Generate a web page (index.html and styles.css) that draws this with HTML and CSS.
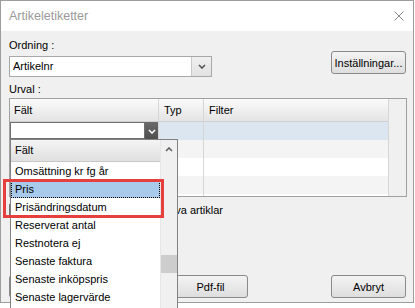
FILE: index.html
```html
<!DOCTYPE html>
<html lang="sv">
<head>
  <meta charset="UTF-8" />
  <title>Artikeletiketter</title>
  <link rel="stylesheet" href="styles.css">
</head>
<body>
  <div class="screen">
    <div class="window">
      <div class="titlebar">
        <span class="title">Artikeletiketter</span>
        <svg class="close" width="10" height="10" viewBox="0 0 10 10">
          <path d="M0.5 0.5 L9.5 9.5 M9.5 0.5 L0.5 9.5" stroke="#8a8a8a" stroke-width="1" fill="none"/>
        </svg>
      </div>
      <div class="content">
        <div class="top-row">
          <div class="order">
            <div class="label">Ordning :</div>
            <div class="combo">
              <span class="combo-text">Artikelnr</span>
              <span class="combo-btn">
                <svg width="8" height="5" viewBox="0 0 8 5"><path d="M1 1 L4 4 L7 1" stroke="#555" stroke-width="1.6" fill="none"/></svg>
              </span>
            </div>
          </div>
          <button class="btn btn-settings">Inställningar...</button>
        </div>

        <div class="label urval">Urval :</div>
        <div class="grid">
          <div class="row head">
            <div class="cell">Fält</div>
            <div class="cell">Typ</div>
            <div class="cell">Filter</div>
            <div class="cell rest"></div>
          </div>
          <div class="row edit">
            <div class="cell editor">
              <span class="editor-box"></span>
              <span class="editor-btn">
                <svg width="8" height="5" viewBox="0 0 8 5"><path d="M1 1 L4 4 L7 1" stroke="#fff" stroke-width="1.6" fill="none"/></svg>
              </span>
            </div>
            <div class="cell"></div>
            <div class="cell"></div>
            <div class="cell rest"></div>
          </div>
          <div class="row alt">
            <div class="cell"></div><div class="cell"></div><div class="cell"></div><div class="cell rest"></div>
          </div>
          <div class="row">
            <div class="cell"></div><div class="cell"></div><div class="cell"></div><div class="cell rest"></div>
          </div>
          <div class="row alt">
            <div class="cell"></div><div class="cell"></div><div class="cell"></div><div class="cell rest"></div>
          </div>
          <div class="row">
            <div class="cell"></div><div class="cell"></div><div class="cell"></div><div class="cell rest"></div>
          </div>
        </div>

        <label class="check"><span class="box"></span>Skriv inte ut etiketter för inaktiva artiklar</label>

        <div class="buttons">
          <button class="btn">Granska</button>
          <button class="btn">Skriv ut</button>
          <button class="btn">Pdf-fil</button>
          <button class="btn btn-cancel">Avbryt</button>
        </div>
      </div>
    </div>
    <div class="behind">2017-02-16</div>

    <div class="dropdown">
      <div class="items">
        <div class="item item-head">Fält</div>
        <div class="item">Omsättning kr fg år</div>
        <div class="item selected">Pris</div>
        <div class="item">Prisändringsdatum</div>
        <div class="item">Reserverat antal</div>
        <div class="item">Restnotera ej</div>
        <div class="item">Senaste faktura</div>
        <div class="item">Senaste inköpspris</div>
        <div class="item">Senaste lagervärde</div>
      </div>
      <div class="scrollbar">
        <svg class="arrow-up" width="8" height="5" viewBox="0 0 8 5"><path d="M1 4 L4 1 L7 4" stroke="#606060" stroke-width="1.6" fill="none"/></svg>
        <div class="thumb"></div>
      </div>
    </div>
    <div class="callout"></div>
  </div>
</body>
</html>
```

FILE: styles.css
```css
body {
  margin: 0;
  background: #fff;
  font-family: "Liberation Sans", Arial, sans-serif;
  font-size: 11px;
  color: #000;
}
.screen {
  position: relative;
  width: 415px;
  height: 308px;
  overflow: hidden;
  background: #fff;
}
.window {
  width: 414px;
  height: 303px;
  box-sizing: border-box;
  border: 1px solid #9d9d9d;
  background: #f0f0f0;
}
.titlebar {
  height: 30px;
  background: #fff;
  display: flex;
  align-items: center;
  justify-content: space-between;
  padding: 0 9px 0 8px;
}
.title {
  font-size: 12.5px;
  color: #9a9a9a;
}
.close {
  display: block;
}
.content {
  padding: 7px 6px 0 8px;
}
.label {
  line-height: 15px;
}
.top-row {
  display: flex;
  justify-content: space-between;
  align-items: flex-start;
}
.combo {
  margin-top: 3px;
  width: 203px;
  height: 21px;
  box-sizing: border-box;
  border: 1px solid #a8a8a8;
  background: #fff;
  display: flex;
}
.combo-text {
  flex: 1;
  padding-left: 3px;
  line-height: 19px;
}
.combo-btn {
  width: 19px;
  border-left: 1px solid #c9c9c9;
  background: linear-gradient(#f0f0f0, #e2e2e2);
  display: flex;
  align-items: center;
  justify-content: center;
}
.btn {
  font: inherit;
  color: #000;
  width: 75px;
  height: 23px;
  padding: 0;
  box-sizing: border-box;
  border: 1px solid #8a8a8a;
  border-radius: 3px;
  background: linear-gradient(#f3f3f3, #dedede);
  white-space: nowrap;
  overflow: hidden;
}
.btn-settings {
  margin-top: 13px;
  margin-right: 1px;
}
.urval {
  margin-top: 5px;
}
.grid {
  margin-top: 1px;
  height: 99px;
  box-sizing: border-box;
  border: 1px solid #a0a0a0;
  overflow: hidden;
  background: #f0f0f0;
}
.row {
  display: grid;
  grid-template-columns: 148px 45px 185px 1fr;
  height: 18px;
}
.cell {
  box-sizing: border-box;
  border-left: 1px solid #d6d6d6;
}
.cell:first-child {
  border-left: none;
}
.row .cell:not(.rest) {
  background: #fff;
}
.row.alt .cell:not(.rest) {
  background: #f4f4f4;
}
.cell.rest {
  background: #f0f0f0;
}
.row.head {
  height: 23px;
}
.row.head .cell:not(.rest) {
  background: linear-gradient(#fbfbfb, #e4e4e4);
  border-bottom: 1px solid #d0d0d0;
  padding-left: 5px;
  line-height: 22px;
}
.row.head .cell:first-child {
  padding-left: 4px;
}
.row.edit .cell:not(.rest) {
  background: #dce6f0;
}
.cell.editor {
  display: flex;
}
.editor-box {
  flex: 1;
  height: 17px;
  box-sizing: border-box;
  border: 1px solid #6f6f6f;
  background: #fff;
}
.editor-btn {
  width: 13px;
  height: 18px;
  background: linear-gradient(#6a6a6a, #4e4e4e);
  display: flex;
  align-items: center;
  justify-content: center;
}
.check {
  margin-top: 6px;
  display: flex;
  align-items: center;
  gap: 9px;
  line-height: 15px;
  white-space: nowrap;
}
.box {
  width: 13px;
  height: 13px;
  box-sizing: border-box;
  border: 1px solid #707070;
  background: #fff;
}
.buttons {
  margin-top: 57px;
  display: flex;
  gap: 7px;
}
.btn-cancel {
  margin-left: auto;
  margin-right: 1px;
}
.behind {
  height: 5px;
  overflow: hidden;
  padding-left: 341px;
  line-height: 19px;
  font-weight: bold;
  color: #444;
}

/* popup list of the field editor */
.dropdown {
  position: absolute;
  left: 10px;
  top: 139px;
  width: 168px;
  height: 175px;
  box-sizing: border-box;
  border: 1px solid #828282;
  background: #fff;
  display: flex;
}
.items {
  flex: 1;
}
.item {
  height: 18px;
  line-height: 18px;
  padding-left: 4px;
  white-space: nowrap;
}
.item-head {
  height: 22px;
  line-height: 21px;
  box-sizing: border-box;
  background: linear-gradient(#f4f4f4, #e0e0e0);
  border-bottom: 1px solid #c8c8c8;
}
.item.selected {
  background: #a8cbeb;
  outline: 1px dotted #000;
  outline-offset: -1px;
}
.scrollbar {
  position: relative;
  width: 16px;
  background: #f0f0f0;
  border-left: 1px solid #e6e6e6;
}
.arrow-up {
  display: block;
  margin: 7px auto 0;
}
.thumb {
  position: absolute;
  left: 0;
  right: 0;
  top: 115px;
  height: 18px;
  background: #cdcdcd;
}
.callout {
  position: absolute;
  left: 3px;
  top: 179px;
  width: 161px;
  height: 39px;
  box-sizing: border-box;
  border: 3px solid #e5403d;
}
```
